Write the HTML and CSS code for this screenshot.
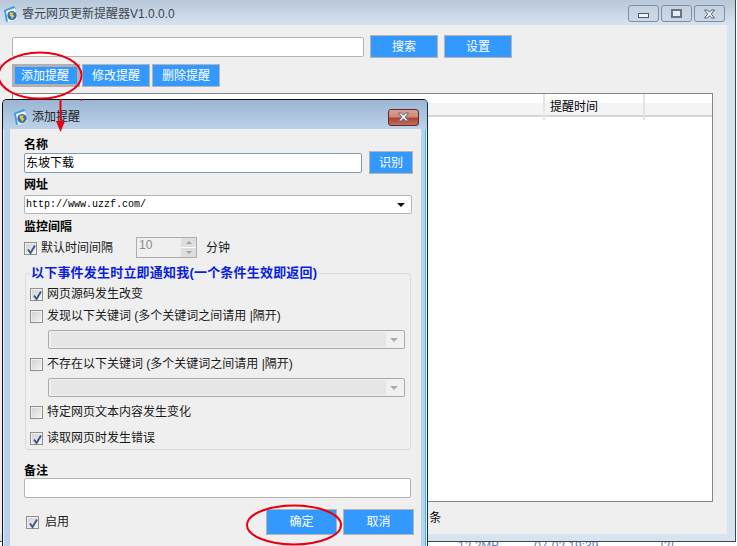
FILE: index.html
```html
<!DOCTYPE html>
<html lang="zh-CN">
<head>
<meta charset="utf-8">
<title>睿元网页更新提醒器</title>
<link rel="stylesheet" href="styles.css">
</head>
<body>
<svg width="0" height="0" class="defs">
  <symbol id="app" viewBox="0 0 16 16">
    <path d="M1 4 11 0l2 3-9 4 2 8-3 1z" fill="#3f9be0"/>
    <path d="M3 5 12 2l2 11-9 3z" fill="#f4f8fb"/>
    <circle cx="9" cy="9.500" r="4.600" fill="#2c6fb5"/>
    <path d="M7 6.500h4l-1.500 2 2 1.500-2.500 3-1-2.500L6.500 9z" fill="#f2c53d"/>
  </symbol>
  <symbol id="x" viewBox="0 0 13 10">
    <path d="M1.500 1h3l2 2.200L8.500 1h3L8.300 5l3.200 4h-3l-2-2.300-2 2.300h-3l3.200-4z" fill="#eef1f5" stroke="#5b6478" stroke-width="1"/>
  </symbol>
  <symbol id="tick" viewBox="0 0 11 11">
    <path d="M2 5.500 4.500 9 9 1.500" fill="none" stroke="#41568f" stroke-width="2"/>
  </symbol>
</svg>

<main class="window">
  <header class="titlebar">
    <svg class="app-icon"><use href="#app"/></svg>
    <span class="title">睿元网页更新提醒器V1.0.0.0</span>
    <div class="win-buttons">
      <span class="win-btn"><i class="glyph-min"></i></span>
      <span class="win-btn"><i class="glyph-max"></i></span>
      <span class="win-btn"><svg class="glyph-x"><use href="#x"/></svg></span>
    </div>
  </header>
  <div class="content">
    <div class="row search-row">
      <div class="input search-input"></div>
      <button class="btn btn-68">搜索</button>
      <button class="btn btn-68">设置</button>
    </div>
    <div class="row action-row">
      <button class="btn btn-68 btn-focus">添加提醒</button>
      <button class="btn btn-68">修改提醒</button>
      <button class="btn btn-68">删除提醒</button>
    </div>
    <section class="table">
      <div class="thead">
        <span class="th"></span>
        <span class="th">提醒时间</span>
        <span class="th"></span>
      </div>
    </section>
    <div class="status">共 0 条</div>
  </div>
</main>
<div class="behind">
  <span class="b1">12.2MB</span><span class="b2">07-02 19:39</span><span class="b3">[2]</span>
</div>

<section class="dialog">
  <header class="dlg-title">
    <svg class="app-icon"><use href="#app"/></svg>
    <span class="dlg-title-text">添加提醒</span>
    <span class="dlg-close"><svg class="glyph-x"><use href="#x"/></svg></span>
  </header>
  <div class="dlg-body">
    <div class="label">名称</div>
    <div class="name-row">
      <div class="input name-input">东坡下载</div>
      <button class="btn btn-recognize">识别</button>
    </div>
    <div class="label label-url">网址</div>
    <div class="input url-combo"><span class="url-text">http://www.uzzf.com/</span><i class="arrow arrow-dark"></i></div>
    <div class="label label-mon">监控间隔</div>
    <div class="interval-row">
      <label class="check"><span class="box"><svg class="tick"><use href="#tick"/></svg></span>默认时间间隔</label>
      <div class="spin"><span class="spin-val">10</span><span class="spin-btns"><i class="up"></i><i class="down"></i></span></div>
      <span class="unit">分钟</span>
    </div>
    <div class="group">
      <div class="legend">以下事件发生时立即通知我(一个条件生效即返回)</div>
      <label class="check g1"><span class="box"><svg class="tick"><use href="#tick"/></svg></span>网页源码发生改变</label>
      <label class="check g2"><span class="box"></span>发现以下关键词 (多个关键词之间请用 |隔开)</label>
      <div class="combo"><span class="combo-fill"></span><i class="arrow"></i></div>
      <label class="check g3"><span class="box"></span>不存在以下关键词 (多个关键词之间请用 |隔开)</label>
      <div class="combo"><span class="combo-fill"></span><i class="arrow"></i></div>
      <label class="check g4"><span class="box"></span>特定网页文本内容发生变化</label>
      <label class="check g5"><span class="box"><svg class="tick"><use href="#tick"/></svg></span>读取网页时发生错误</label>
    </div>
    <div class="label label-note">备注</div>
    <div class="input note-input"></div>
    <div class="footer">
      <label class="check enable"><span class="box"><svg class="tick"><use href="#tick"/></svg></span>启用</label>
      <button class="btn btn-71">确定</button>
      <button class="btn btn-71">取消</button>
    </div>
  </div>
</section>

<svg class="annotations" width="737" height="546" viewBox="0 0 737 546">
  <ellipse cx="40" cy="75.500" rx="41.500" ry="23" fill="none" stroke="#e60012" stroke-width="2"/>
  <path d="M60.500 99v26" stroke="#e60012" stroke-width="2"/>
  <path d="M56 121h9l-4.500 11z" fill="#e60012"/>
  <ellipse cx="294" cy="525" rx="47" ry="19.500" fill="none" stroke="#e60012" stroke-width="2"/>
  <rect x="81" y="99" width="1" height="2" fill="#e60012"/>
</svg>
</body>
</html>
```
FILE: styles.css
```css
* { box-sizing: border-box; }
html, body {
  margin: 0;
  padding: 0;
  height: 546px;
  overflow: hidden;
  background: #fff;
}
body {
  position: relative;
  font: 12px/14px "Liberation Sans", "Noto Sans CJK SC", sans-serif;
  color: #000;
}
.defs { position: absolute; }
i { display: block; }

.window {
  width: 736px;
  height: 542px;
  background: #d6e3f1;
  border-right: 1px solid #444;
  border-bottom: 1px solid #444;
  display: flex;
  flex-direction: column;
}
.titlebar {
  height: 25px;
  flex: none;
  display: flex;
  align-items: center;
  padding: 2px 10px 0 3px;
  background: linear-gradient(#b8c8d8, #d6e3f1);
}
.app-icon { width: 16px; height: 16px; flex: none; }
.title { margin-left: 3px; color: #3d4650; }
.win-buttons { margin-left: auto; display: flex; gap: 2px; }
.win-btn {
  width: 31px;
  height: 17px;
  display: flex;
  align-items: center;
  justify-content: center;
  border: 1px solid #7d8ca8;
  border-radius: 3px;
  background: linear-gradient(#c4d2e1, #ccd8e6);
}
.glyph-min { width: 11px; height: 5px; margin-top: 3px; background: #f2f4f7; border: 1px solid #4e5668; }
.glyph-max { width: 11px; height: 9px; border: 2px solid #6a7286; background: #e8edf3; }
.glyph-x { width: 13px; height: 10px; display: block; }

.content {
  width: 727px;
  height: 509px;
  background: #efefef;
  padding: 10px 14px 0 12px;
  display: flex;
  flex-direction: column;
}
.row { display: flex; align-items: center; }
.search-row { height: 23px; gap: 6px; }
.search-input { width: 352px; height: 20px; }
.action-row { height: 23px; gap: 2px; margin-top: 6px; }

.input {
  background: #fff;
  border: 1px solid #b4b4b4;
  border-radius: 2px;
}
.btn {
  display: block;
  padding: 0;
  height: 23px;
  font: inherit;
  color: #fff;
  background: #3399ff;
  border: 1px solid #b5b5b5;
  border-radius: 0;
  text-align: center;
}
.btn-68 { width: 68px; }
.btn-focus { border-width: 3px; border-color: #b0b0b0; padding-right: 2px; }

.table {
  margin-top: 6px;
  width: 701px;
  height: 410px;
  background: #fff;
  border: 1px solid #85878c;
}
.thead {
  display: grid;
  grid-template-columns: 532px 100px 1fr;
  height: 23px;
  background: linear-gradient(#fff 0, #fff 42%, #f3f4f6 42%, #f3f4f6 100%);
  border-bottom: 2px solid #d5d5d5;
}
.th {
  border-right: 2px solid #e4e4e4;
  line-height: 26px;
  padding-left: 5px;
}
.th:last-child { border-right: 0; }
.status { flex: 1; line-height: 32px; padding-left: 392px; }

.behind {
  height: 4px;
  overflow: hidden;
  display: flex;
  color: #5d7cae;
  line-height: 8px;
  font-size: 12px;
}
.b1 { margin-left: 458px; }
.b2 { margin-left: 35px; }
.b3 { margin-left: 62px; }

.dialog {
  position: absolute;
  left: 2px;
  top: 99px;
  width: 426px;
  height: 460px;
  background: #b9d1ea;
  border: 1px solid #111;
  border-right-color: #0b3346;
  border-radius: 5px 5px 0 0;
  box-shadow: inset 0 0 0 1px #e9f4fb, inset -1px 0 0 1px #3fb6e8;
}
.dlg-title {
  height: 29px;
  display: flex;
  align-items: center;
  padding: 5px 8px 0 10px;
  background: linear-gradient(#9bb5d2, #bcd2ea);
  border-radius: 4px 4px 0 0;
}
.dlg-title-text { margin-left: 3px; color: #222; }
.dlg-close {
  margin-left: auto;
  width: 31px;
  height: 17px;
  display: flex;
  align-items: center;
  justify-content: center;
  border: 1px solid #5a2c30;
  border-radius: 3px;
  background: linear-gradient(#dc9f92 0, #d28a79 45%, #b0422c 55%, #c46e5c 100%);
}
.dlg-body {
  margin: 0 6px 0 7px;
  height: 430px;
  background: #efefef;
  padding: 8px 0 0 14px;
}
.label { font-weight: 700; height: 14px; line-height: 16px; }
.name-row { display: flex; align-items: center; gap: 7px; height: 23px; }
.name-input {
  width: 338px;
  height: 20px;
  border-color: #7d9cb8;
  line-height: 18px;
  padding-left: 1px;
}
.btn-recognize { width: 44px; }
.label-url { margin-top: 3px; }
.url-combo {
  margin-top: 4px;
  width: 388px;
  height: 19px;
  display: flex;
  align-items: center;
  justify-content: space-between;
  padding: 0 6px 0 1px;
}
.url-text { font: 10px/17px "Liberation Mono", monospace; }
.label-mon { margin-top: 5px; }
.arrow {
  width: 0;
  height: 0;
  border-style: solid;
  border-width: 4px 4px 0;
  border-color: #a9a9a9 transparent transparent;
}
.arrow-dark { border-width: 4px 4.500px 0; border-top-color: #111; }

.check { display: flex; align-items: center; gap: 4px; height: 18px; color: #1a1a1a; }
.box {
  width: 13px;
  height: 13px;
  flex: none;
  border: 1px solid #8e8f8f;
  background: linear-gradient(135deg, #d0d0d0, #f4f4f4);
  box-shadow: inset 0 0 0 1px #f0f0f0;
  padding: 1px;
}
.tick { width: 11px; height: 11px; display: block; }

.interval-row { display: flex; align-items: center; height: 21px; margin-top: 4px; }
.interval-row .check { width: 112px; margin-top: 1px; }
.spin {
  width: 61px;
  height: 21px;
  border: 1px solid #adadad;
  display: flex;
  justify-content: space-between;
  color: #8b8b8b;
  padding-left: 2px;
}
.spin-val { line-height: 15px; }
.spin-btns { width: 15px; display: flex; flex-direction: column; gap: 1px; background: #fff; }
.spin-btns i { flex: 1; background: #dedede; position: relative; display: flex; align-items: center; justify-content: center; }
.spin-btns i::after { content: ""; border-style: solid; border-color: transparent; }
.up::after { border-width: 0 3px 3px; border-bottom-color: #a2a2a2 !important; }
.down::after { border-width: 3px 3px 0; border-top-color: #a2a2a2 !important; }
.unit { margin-left: 9px; margin-top: 1px; color: #1a1a1a; }

.group {
  margin: 15px 0 0 1px;
  width: 386px;
  height: 177px;
  border: 1px solid #d3dbe3;
  border-radius: 3px;
  padding: 0 0 0 4px;
}
.legend {
  width: fit-content;
  height: 16px;
  margin: -9px 0 0 0;
  background: #efefef;
  padding: 0 1px;
  color: #0a1ee0;
  font-size: 13px;
  line-height: 16px;
  font-weight: 700;
  letter-spacing: 0.2px;
}
.g1 { margin-top: 4px; }
.g2 { margin-top: 4px; }
.g3 { margin-top: 6px; }
.g4 { margin-top: 6px; }
.g5 { margin-top: 8px; }
.combo {
  margin: 5px 0 0 18px;
  width: 357px;
  height: 19px;
  display: flex;
  align-items: center;
  justify-content: space-between;
  background: #f1f1f1;
  border: 1px solid #a9a9a9;
  border-radius: 2px;
  padding: 1px 6px 1px 2px;
}
.combo-fill { width: 335px; height: 100%; background: #e6e6e6; }

.label-note { margin-top: 13px; }
.note-input { margin-top: 1px; width: 387px; height: 20px; }
.footer { display: flex; align-items: center; margin-top: 11px; width: 390px; height: 26px; gap: 6px; }
.enable { margin: 0 auto 0 2px; gap: 6px; }
.btn-71 { width: 71px; height: 26px; }

.annotations { position: absolute; left: 0; top: 0; pointer-events: none; }
```
